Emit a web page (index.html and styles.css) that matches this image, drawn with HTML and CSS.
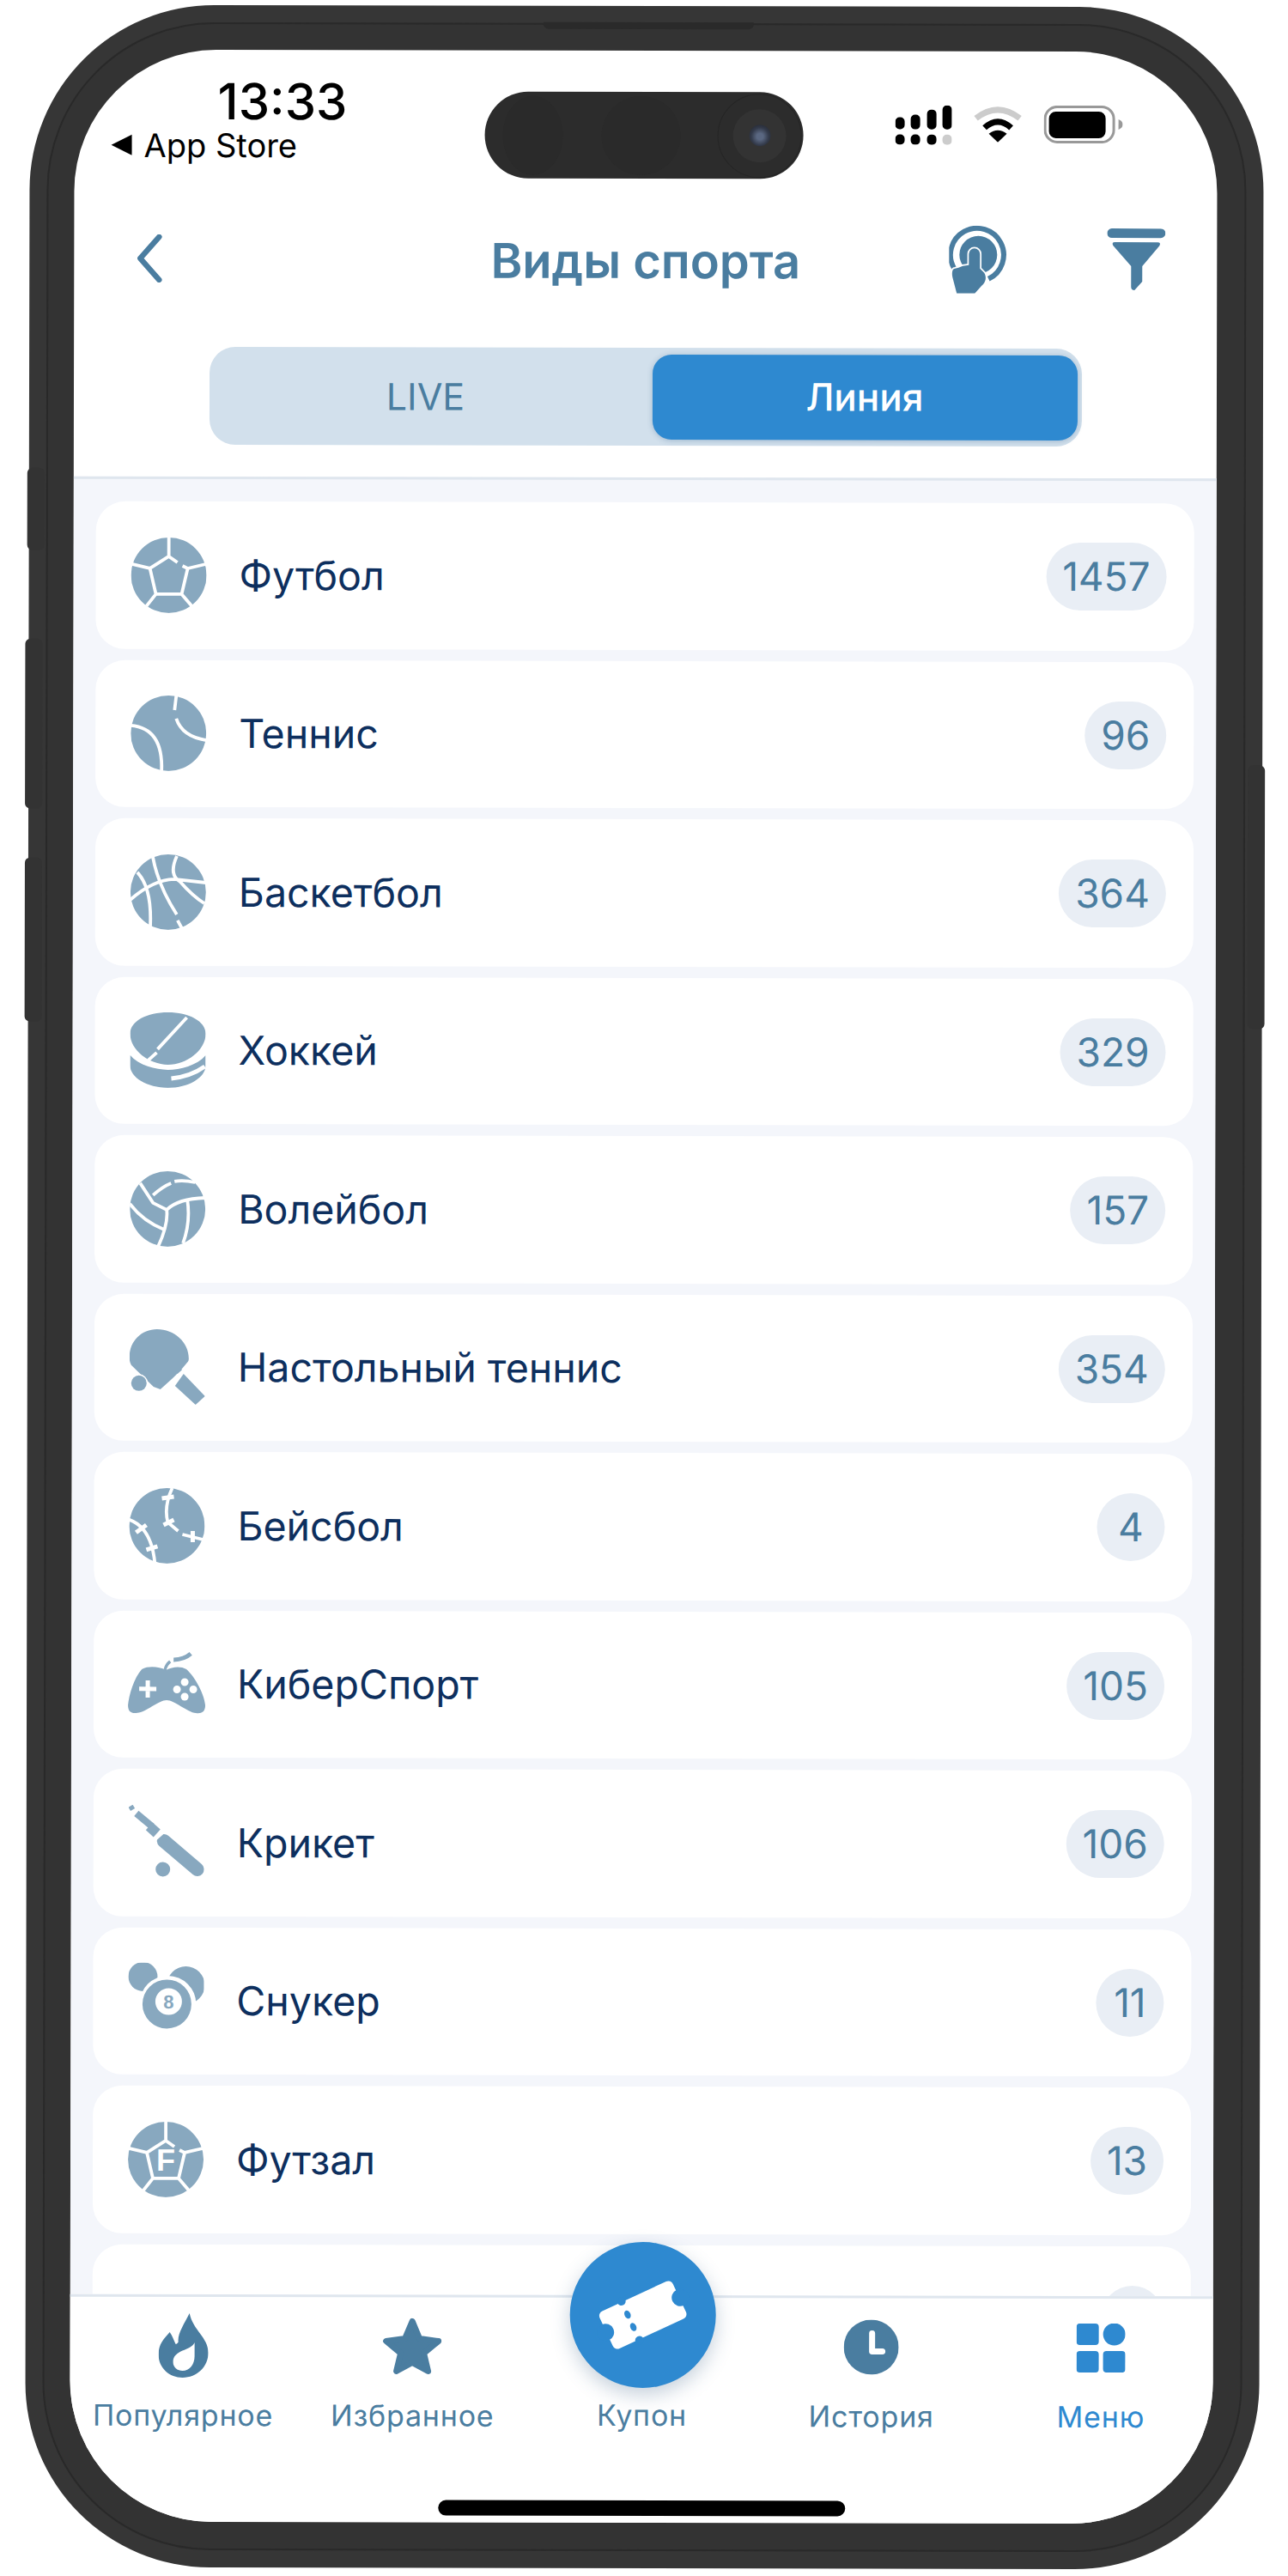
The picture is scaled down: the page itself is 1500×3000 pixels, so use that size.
FILE: index.html
```html
<!DOCTYPE html>
<html lang="ru">
<head>
<meta charset="utf-8">
<title>Виды спорта</title>
<link rel="stylesheet" href="styles.css">
</head>
<body>
<div class="phone">
  <span class="side side-a"></span><span class="side side-b"></span><span class="side side-c"></span><span class="side side-d"></span>
  <span class="speaker"></span>
  <div class="screen">
    <div class="island"><span class="faint faint-a"></span><span class="faint faint-b"></span><span class="cam"><span class="cam-ring"><span class="lens"></span></span></span></div>
    <div class="status">
      <div class="status-left">
        <div class="time">13:33</div>
        <div class="back-app"><span class="tri"></span>App Store</div>
      </div>
      <div class="status-right">
        <svg width="66" height="46" viewBox="0 0 66 46"><rect x="0" y="14" width="11" height="14" rx="5"/><rect x="18" y="11" width="11" height="17" rx="5"/><rect x="37" y="5" width="11" height="23" rx="5"/><rect x="55" y="0" width="11" height="28" rx="5"/><rect x="0" y="34" width="11" height="12" rx="5"/><rect x="18" y="34" width="11" height="12" rx="5"/><rect x="37" y="34" width="11" height="12" rx="5"/><rect x="55" y="34" width="11" height="12" rx="5" fill="#ccc"/></svg>
        <svg width="57" height="43" viewBox="0 0 57 43" fill="none"><path d="M3 15Q28.500-5 54 15" stroke="#ccc" stroke-width="7"/><path d="M13 26Q28.500 12 44 26" stroke="#000" stroke-width="7"/><path d="M28.500 43L18 33Q28.500 25 39 33Z" fill="#000"/></svg>
        <svg width="92" height="44" viewBox="0 0 92 44"><rect x="1.500" y="1.500" width="80" height="41" rx="14" fill="none" stroke="#999" stroke-width="3"/><rect x="6" y="7" width="66" height="31" rx="8"/><path d="M87 16q5 2 5 6t-5 6z" fill="#999"/></svg>
      </div>
    </div>
    <div class="nav">
      <div class="nav-left"><svg width="30" height="56" viewBox="0 0 30 56" fill="none" stroke="#4a7da0" stroke-width="6.500" stroke-linecap="round" stroke-linejoin="round"><path d="M26 3L4 28L26 53"/></svg></div>
      <h1 class="title">Виды спорта</h1>
      <div class="nav-right">
        <svg width="69" height="79" viewBox="0 0 69 79"><path d="M6 50A31 31 0 1 1 46 62" fill="none" stroke="#4a7da0" stroke-width="6"/><circle cx="34" cy="34" r="22" fill="#4a7da0"/><path d="M23 33a6.500 6.500 0 0 1 13 0V50L41 55C44 60 43 66 38 70L30 79H9L4 60C3 54 4 50 7 50L11 49L16 47L23 46Z" fill="#4a7da0" stroke="#fff" stroke-width="3.500" paint-order="stroke"/></svg>
        <svg width="68" height="72" viewBox="0 0 68 72" fill="#4a7da0"><rect width="68" height="11" rx="5.500"/><path d="M9 16H59Q63 16 61 20L41 44V62L32 72Q28 72 28 68V44L7 20Q5 16 9 16Z"/></svg>
      </div>
    </div>
    <div class="segment">
      <div class="seg-live">LIVE</div>
      <div class="seg-line">Линия</div>
    </div>
    <div class="list">
      <div class="row">
        <svg class="sport" viewBox="0 0 88 88"><circle class="f" cx="44" cy="44" r="44"/><path class="c" d="M44 0V22L54 29M60 33L66 36L59 66H29L22 36L44 22M1 31L22 36M87 31L66 36M29 66L18 80M59 66L71 80"/></svg>
        <span class="name">Футбол</span><span class="count">1457</span>
      </div>
      <div class="row">
        <svg class="sport" viewBox="0 0 88 88"><circle class="f" cx="44" cy="44" r="44"/><path class="c" d="M0 35Q38 38 36 88M53 0L51 17M53 27Q60 48 88 52"/></svg>
        <span class="name">Теннис</span><span class="count">96</span>
      </div>
      <div class="row">
        <svg class="sport" viewBox="0 0 88 88"><circle class="f" cx="44" cy="44" r="44"/><path class="c" d="M26 3Q32 36 54 70M55 77L61 88M0 53Q26 30 51 29L88 33M8 21Q26 40 23 88M54 2Q44 24 58 32Q72 48 86 57"/></svg>
        <span class="name">Баскетбол</span><span class="count">364</span>
      </div>
      <div class="row">
        <svg class="sport" viewBox="0 0 88 88"><path class="f" d="M0 25C0 10 20 0 44 0S88 10 88 25C88 44 66 61 44 61S0 44 0 25Z"/><path class="f" d="M0 50C10 62 30 67 44 67S78 62 88 50V62C88 76 68 88 44 88S0 76 0 62Z"/><path class="c" d="M66 6L32 43M31 47L21 56"/><path class="c c5" d="M48 77Q70 75 87 63"/></svg>
        <span class="name">Хоккей</span><span class="count">329</span>
      </div>
      <div class="row">
        <svg class="sport" viewBox="0 0 88 88"><circle class="f" cx="44" cy="44" r="44"/><path class="c" d="M12 14L27 37L43 45Q56 32 88 31M0 38Q15 58 40 68M43 45Q45 62 33 88M67 33Q71 60 62 84M27 28Q38 18 48 14M52 12Q62 10 76 13"/></svg>
        <span class="name">Волейбол</span><span class="count">157</span>
      </div>
      <div class="row">
        <svg class="sport" viewBox="0 0 88 88"><path class="f" d="M32 0C52 0 69 15 69 34C69 37 68 40 67 42L36 70L28 67L2 42C0 38 0 36 0 32C0 14 14 0 32 0Z"/><path class="f" d="M63 52L88 78L77 88L53 66Z"/><path class="c" d="M72 36L62 48M57 53L44 67"/><circle class="f halo" cx="11" cy="63" r="9"/></svg>
        <span class="name">Настольный теннис</span><span class="count">354</span>
      </div>
      <div class="row">
        <svg class="sport" viewBox="0 0 88 88"><circle class="f" cx="44" cy="44" r="44"/><path class="c" d="M0 37Q26 46 30 88M50 0Q40 22 45 40L57 50M62 54L86 60"/><path class="c c5" d="M38 12L52 10M40 43L52 37M74 50L74 63M8 52L20 43M20 72L33 68"/></svg>
        <span class="name">Бейсбол</span><span class="count">4</span>
      </div>
      <div class="row">
        <svg class="sport over" viewBox="2 -7 88 88"><path class="f" d="M17 20C25 16 37 17 45 21C53 17 62 16 69 20C80 30 90 50 91 62C91 70 86 72 80 71C70 70 55 56 46 56C37 56 22 70 12 71C5 72 1 70 1 62C2 50 8 30 17 20Z"/><path class="c c5" d="M14 43H34M24 33V53"/><circle class="w" cx="67" cy="35" r="4.500"/><circle class="w" cx="58" cy="43.500" r="4.500"/><circle class="w" cx="77" cy="43.500" r="4.500"/><circle class="w" cx="67" cy="52" r="4.500"/><path class="s" d="M44 21Q45 15 50 11"/><path class="s s5" d="M54 9Q66 9 74 2"/></svg>
        <span class="name">КиберСпорт</span><span class="count">105</span>
      </div>
      <div class="row">
        <svg class="sport" viewBox="0 0 88 88"><path class="s s5" d="M1 5L6 2"/><path class="s s8" d="M9 10L27 25"/><path class="s s12" d="M24 25L33 33"/><path class="s s16" d="M41 42L80 75"/><path class="s s8" d="M36 37L44 43"/><path class="c" d="M30 41L47 26"/><circle class="f" cx="40" cy="75" r="8.500"/></svg>
        <span class="name">Крикет</span><span class="count">106</span>
      </div>
      <div class="row">
        <svg class="sport" viewBox="0 0 88 88"><circle class="f" cx="17" cy="16" r="17"/><circle class="f" cx="67" cy="26" r="22"/><path class="f" d="M66 40L78 43L76 48Z"/><circle class="w" cx="46" cy="48" r="33"/><circle class="f" cx="45" cy="48" r="28.500"/><circle class="w" cx="47" cy="45" r="15.500"/><text class="eight" x="47" y="53">8</text></svg>
        <span class="name">Снукер</span><span class="count">11</span>
      </div>
      <div class="row">
        <svg class="sport" viewBox="0 0 88 88"><circle class="f" cx="44" cy="44" r="44"/><path class="c" d="M44 0V22L54 29M60 33L66 36L59 66H29L22 36L44 22M1 31L22 36M87 31L66 36M29 66L18 80M59 66L71 80"/><text class="eff" x="44" y="57">F</text></svg>
        <span class="name">Футзал</span><span class="count">13</span>
      </div>
      <div class="row"><span class="sport"></span><span class="count count-empty"></span></div>
    </div>
    <div class="tabbar">
      <div class="tab">
        <div class="tab-icon"><svg width="58" height="76" viewBox="0 0 58 76"><path fill="#4a7da0" d="M36 0C30 12 22 24 23 33C23.500 34 21 36 20 36C18 32 16 26 13 22C6 30 0 36 0 48C0 64 13 75 28 75C45 75 58 62 58 46C58 28 40 20 36 0Z"/><path fill="#fff" d="M42 34C38 44 17 42 17 57C17 63 22 67 28 67C36 67 42 60 42 50Z"/></svg></div>
        <div class="tab-label">Популярное</div>
      </div>
      <div class="tab">
        <div class="tab-icon"><svg width="69" height="66" viewBox="0 0 69 66"><path fill="#4a7da0" stroke="#4a7da0" stroke-width="7" stroke-linejoin="round" d="M34.500 4L43 24L65 27L48 41L53 62L34.500 52L16 62L21 41L4 27L26 24Z"/></svg></div>
        <div class="tab-label">Избранное</div>
      </div>
      <div class="tab">
        <div class="coupon"><svg width="110" height="90" viewBox="-55 -45 110 90"><g transform="rotate(-25)"><rect x="-47" y="-24" width="94" height="48" rx="6" fill="#fff"/><g fill="#2e89d0"><circle cx="-48" cy="0" r="10"/><circle cx="48" cy="0" r="10"/><circle cx="-16" cy="-25" r="5"/><circle cx="-16" cy="25" r="5"/><ellipse cx="-16" cy="-8" rx="3.500" ry="5"/><ellipse cx="-16" cy="8" rx="3.500" ry="5"/></g></g></svg></div>
        <div class="tab-label tab-label-tight">Купон</div>
      </div>
      <div class="tab">
        <div class="tab-icon"><svg width="64" height="64" viewBox="0 0 64 64"><circle cx="32" cy="32" r="32" fill="#4a7da0"/><path d="M33 16V37H45" fill="none" stroke="#fff" stroke-width="7" stroke-linecap="round" stroke-linejoin="round"/></svg></div>
        <div class="tab-label">История</div>
      </div>
      <div class="tab">
        <div class="tab-icon"><svg width="57" height="57" viewBox="0 0 57 57" fill="#2e89d0"><rect width="26" height="25" rx="4"/><circle cx="44" cy="12.500" r="13"/><rect y="32" width="26" height="25" rx="4"/><rect x="31" y="32" width="26" height="25" rx="4"/></svg></div>
        <div class="tab-label tab-label-on">Меню</div>
      </div>
      <span class="home"></span>
    </div>
  </div>
</div>
</body>
</html>
```
FILE: styles.css
```css
html, body { margin: 0; padding: 0; background: #fff; }
body { height: 3000px; overflow: hidden; font-family: Inter, "Noto Sans", sans-serif; }

.phone {
  position: relative;
  box-sizing: border-box;
  width: 1437px;
  height: 2984px;
  margin: 7px auto 0;
  padding: 52px 54px 53px 52px;
  background: #363636;
  border-radius: 215px;
  transform: rotate(0.11deg);
}
.phone::before {
  content: "";
  position: absolute;
  inset: 20px;
  border: 2px solid #292929;
  border-radius: 195px;
  background: #333;
}
.side { position: absolute; background: #333; z-index: -1; border-radius: 6px; }
.side-a { left: -2px; top: 539px; width: 20px; height: 96px; }
.side-b { left: -4px; top: 738px; width: 20px; height: 198px; }
.side-c { left: -4px; top: 993px; width: 20px; height: 191px; }
.side-d { right: -3px; top: 883px; width: 20px; height: 307px; }
.speaker { position: absolute; left: 598px; top: 19px; width: 245px; height: 8px; background: #2a2a2a; border-radius: 0 0 6px 6px; z-index: 1; }

.screen {
  position: relative;
  display: flex;
  flex-direction: column;
  height: 100%;
  overflow: hidden;
  background: #fff;
  border-radius: 165px;
}

.island {
  position: absolute;
  left: 478px;
  top: 48px;
  display: flex;
  align-items: center;
  width: 371px;
  height: 101px;
  padding: 0 2px 0 21px;
  box-sizing: border-box;
  background: #2c2c2c;
  border-radius: 51px;
}
.faint { flex: none; height: 92px; border-radius: 50%; background: #2a2a2a; }
.faint-a { width: 70px; }
.faint-b { width: 92px; margin-left: 45px; }
.cam { display: flex; align-items: center; justify-content: center; width: 96px; height: 96px; margin-left: auto; border-radius: 50%; border: 1px solid #252525; }
.cam-ring { display: flex; align-items: center; justify-content: center; width: 62px; height: 62px; border-radius: 50%; background: #333; }
.lens { width: 25px; height: 25px; border-radius: 50%; background: radial-gradient(circle at 50% 55%, #5a6781 0 20%, #333a4a 55%, #1d1f25 100%); }

.status { display: flex; justify-content: space-between; height: 170px; box-sizing: border-box; padding: 30px 110px 0 43px; }
.time { margin-left: 124px; font-size: 58px; line-height: 60px; font-weight: 500; color: #000; }
.back-app { display: flex; align-items: center; font-size: 38px; line-height: 42px; color: #000; }
.tri { width: 0; height: 0; margin-right: 14px; border-style: solid; border-width: 12px 24px 12px 0; border-color: transparent #000 transparent transparent; }
.status-right { display: flex; align-items: flex-start; gap: 25px; padding-top: 33px; }

.nav { display: grid; grid-template-columns: 1fr auto 1fr; align-items: center; height: 150px; padding: 0 60px; }
.nav-left, .nav-right { display: flex; align-items: center; }
.nav-left { padding: 0 0 4px 13px; }
.nav-right { justify-content: flex-end; gap: 115px; padding-bottom: 6px; }
.title { margin: 0; font-size: 56px; line-height: 70px; font-weight: 600; color: #4a7da0; }

.segment {
  display: flex;
  align-items: center;
  box-sizing: border-box;
  width: 1016px;
  height: 114px;
  margin: 26px auto 37px;
  padding: 0 5px 0 0;
  background: #d2e0ec;
  border-radius: 30px;
}
.seg-live { flex: 1; padding-right: 12px; text-align: center; font-size: 43px; color: #4a7da0; }
.seg-line {
  display: flex;
  align-items: center;
  justify-content: center;
  width: 495px;
  height: 99px;
  background: #2e89d0;
  border-radius: 22px;
  box-shadow: 0 1px 6px rgba(40, 90, 140, .3);
  font-size: 44px;
  font-weight: 500;
  color: #fff;
}

.list {
  flex: 1;
  min-height: 0;
  display: flex;
  flex-direction: column;
  gap: 13px;
  overflow: hidden;
  padding: 26px 26px 0;
  background: #f4f6fb;
  border-top: 3px solid #dfe6ee;
}
.row {
  flex: none;
  display: flex;
  align-items: center;
  height: 171.5px;
  padding: 0 32px 0 41px;
  background: #fff;
  border-radius: 34px;
}
.sport { flex: none; width: 88px; height: 88px; margin-right: 38px; }
.over { overflow: visible; }
.name { font-size: 46.5px; color: #0d2f5e; }
.count {
  margin-left: auto;
  min-width: 79px;
  height: 79px;
  padding: 0 19px;
  box-sizing: border-box;
  background: #e9eef5;
  border-radius: 40px;
  text-align: center;
  font-size: 46px;
  line-height: 79px;
  color: #4a7da0;
}
.count-empty { min-width: 72px; }

.f { fill: #88a8bf; }
.w { fill: #fff; }
.c { fill: none; stroke: #fff; stroke-width: 3.8; }
.c5 { stroke-width: 5; }
.s { fill: none; stroke: #88a8bf; stroke-width: 3.5; }
.s5 { stroke-width: 5; }
.s8 { stroke-width: 8; }
.s12 { stroke-width: 12; }
.s16 { stroke-width: 16; stroke-linecap: round; }
.halo { stroke: #fff; stroke-width: 3; paint-order: stroke; }
.eight { font-family: "Liberation Sans", sans-serif; font-size: 22px; font-weight: 700; fill: #88a8bf; text-anchor: middle; }
.eff { font-family: "Liberation Sans", sans-serif; font-size: 36px; font-weight: 700; fill: #fff; text-anchor: middle; }

.tabbar {
  position: relative;
  flex: none;
  display: grid;
  grid-template-columns: repeat(5, 1fr);
  height: 265px;
  margin: 0 -3px 0 -2px;
  box-sizing: border-box;
  border-top: 3px solid #dfe6ee;
  background: #fff;
}
.tab { display: flex; flex-direction: column; align-items: center; padding-top: 17px; min-width: 0; }
.tab-icon { display: flex; align-items: center; justify-content: center; height: 80px; }
.tab-label { margin-top: 21px; font-size: 34px; line-height: 40px; letter-spacing: .8px; color: #4a7da0; white-space: nowrap; }
.tab-label-tight { margin-top: 12px; }
.tab-label-on { color: #2e89d0; }
.coupon {
  display: flex;
  align-items: center;
  justify-content: center;
  flex: none;
  width: 170px;
  height: 170px;
  margin: -82px 0 0 3px;
  background: #2e89d0;
  border-radius: 50%;
  box-shadow: 0 8px 22px rgba(50, 90, 130, .28);
}
.home { position: absolute; left: 431px; bottom: 8px; width: 474px; height: 18px; background: #000; border-radius: 9px; }
```
